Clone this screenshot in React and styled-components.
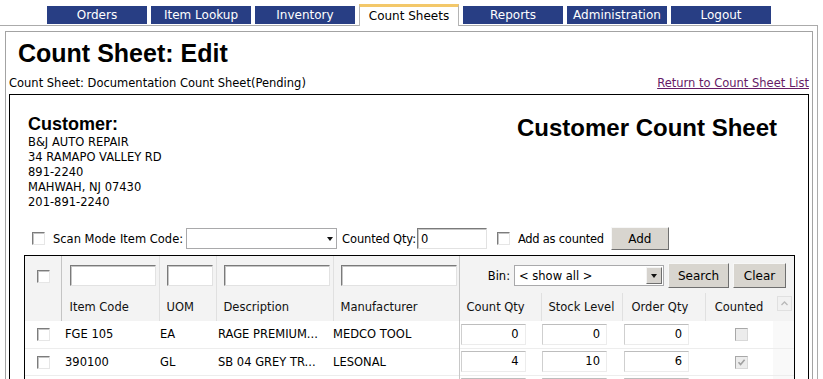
import styled, { createGlobalStyle } from 'styled-components'

const GlobalStyle = createGlobalStyle`
  body {
    margin: 0;
    background: #fff;
    font-family: "DejaVu Sans", Verdana, sans-serif;
    font-size: 11.5px;
    color: #000;
  }
`

const tabs = ['Orders', 'Item Lookup', 'Inventory', 'Count Sheets', 'Reports', 'Administration', 'Logout']

// the third row only shows the top of its qty boxes in the screenshot
const rows = [
  { id: 1, code: 'FGE 105', uom: 'EA', desc: 'RAGE PREMIUM...', mfr: 'MEDCO TOOL', count: 0, stock: 0, order: 0, counted: false },
  { id: 2, code: '390100', uom: 'GL', desc: 'SB 04 GREY TR...', mfr: 'LESONAL', count: 4, stock: 10, order: 6, counted: true },
  { id: 3, code: '', uom: '', desc: '', mfr: '', count: '', stock: '', order: '', counted: false, hidden: true },
]

const address = ['B&J AUTO REPAIR', '34 RAMAPO VALLEY RD', '891-2240', 'MAHWAH, NJ 07430', '201-891-2240']

const Page = styled.div`
  width: 823px;
  overflow: hidden;
`

const TabBar = styled.nav`
  position: relative;
  z-index: 1;
  height: 25px;
  display: flex;
  align-items: flex-end;
  gap: 4px;
  padding-left: 47px;
`

const Tab = styled.div`
  box-sizing: border-box;
  width: 100px;
  height: ${p => (p.$active ? '22px' : '18px')};
  margin-bottom: ${p => (p.$active ? '-1px' : '1px')};
  padding-bottom: ${p => (p.$active ? '1px' : '0')};
  display: flex;
  align-items: center;
  justify-content: center;
  background: ${p => (p.$active ? '#fff' : '#283e84')};
  color: ${p => (p.$active ? '#000' : '#fff')};
  border-top: ${p => (p.$active ? '3px solid #f3c86a' : 'none')};
  border-left: ${p => (p.$active ? '1px solid #b4b4b4' : 'none')};
  border-right: ${p => (p.$active ? '1px solid #b4b4b4' : 'none')};
  font-size: 12px;
`

const Frame = styled.div`
  width: 818px;
  box-sizing: border-box;
  border-top: 1px solid #ababab;
  border-right: 1px solid #ababab;
  padding: 5px 4px 0 5px;
`

const Panel = styled.div`
  border: 1px solid #a3a3a3;
  border-bottom: none;
  padding: 0 3px;
  min-height: 360px;
`

const Title = styled.h1`
  margin: 6px 0 0 9px;
  font-family: "Liberation Sans", Arial, sans-serif;
  font-size: 25px;
  line-height: 30px;
  font-weight: bold;
`

const SubRow = styled.div`
  margin-top: 8px;
  height: 14px;
  line-height: 14px;
  display: flex;
  justify-content: space-between;
`

const ReturnLink = styled.a`
  color: #661a66;
  text-decoration: underline;
`

const SheetBox = styled.div`
  margin-top: 4px;
  border: 1px solid #000;
  border-bottom: none;
  min-height: 300px;
`

const CustomerHeader = styled.div`
  display: flex;
  justify-content: space-between;
  align-items: flex-start;
  padding: 19px 31px 0 18px;
`

const CustomerLabel = styled.div`
  font-family: "Liberation Sans", Arial, sans-serif;
  font-weight: bold;
  font-size: 18px;
  line-height: 21px;
`

const AddressLine = styled.div`
  line-height: 15px;
`

const SheetTitle = styled.div`
  font-family: "Liberation Sans", Arial, sans-serif;
  font-weight: bold;
  font-size: 24px;
  line-height: 28px;
`

const ScanRow = styled.div`
  margin-top: 17px;
  height: 23px;
  display: flex;
  align-items: center;
  padding-left: 22px;
`

const Label = styled.span`
  margin-left: ${p => p.$ml || 0}px;
  white-space: nowrap;
  letter-spacing: ${p => p.$ls || 0}px;
`

const Box = styled.span`
  box-sizing: border-box;
  display: inline-flex;
  align-items: center;
  justify-content: center;
  flex: none;
  width: 13px;
  height: 13px;
  margin-left: ${p => p.$ml || 0}px;
  border: 1px solid;
  border-color: ${p => (p.$disabled ? '#a8a8a8 #d8d8d8 #d8d8d8 #a8a8a8' : '#7c7c7c #e6e6e6 #e6e6e6 #7c7c7c')};
  box-shadow: ${p => (p.$disabled ? 'none' : 'inset 1px 1px 0 #c4c4c4')};
  background: ${p => (p.$disabled ? '#ececec' : '#fff')};
  vertical-align: middle;
`

const Checkbox = ({ checked, disabled, ml }) => (
  <Box $disabled={disabled} $ml={ml}>
    {checked && (
      <svg width="9" height="9" viewBox="0 0 9 9">
        <path d="M1.5 4.2 L3.6 6.5 L7.6 1.8" stroke="#a0a0a0" strokeWidth="1.6" fill="none" />
      </svg>
    )}
  </Box>
)

const Combo = styled.div`
  box-sizing: border-box;
  width: ${p => p.$w}px;
  height: 21px;
  margin-left: ${p => p.$ml || 0}px;
  border: 1px solid #a9a9ab;
  background: #fff;
  display: flex;
  align-items: center;
  justify-content: space-between;
  padding: 0 ${p => p.$pr ?? 3}px 0 4px;
  text-align: left;
`

const Caret = styled.span`
  width: 0;
  height: 0;
  border-left: 3.5px solid transparent;
  border-right: 3.5px solid transparent;
  border-top: 4px solid #111;
`

const DropButton = styled.span`
  box-sizing: border-box;
  width: 16px;
  height: 17px;
  display: flex;
  align-items: center;
  justify-content: center;
  background: #d6d3ce;
  border: 1px solid;
  border-color: #f4f4f4 #6e6e6e #6e6e6e #f4f4f4;
`

const TextBox = styled.div`
  box-sizing: border-box;
  width: ${p => p.$w}px;
  height: ${p => p.$h || 21}px;
  margin-left: ${p => p.$ml || 0}px;
  border: 1px solid;
  border-color: #7a7a7a #e2e2e2 #e2e2e2 #7a7a7a;
  box-shadow: inset 1px 1px 0 #c6c6c6;
  background: #fff;
  padding: 0 3px;
  display: flex;
  align-items: center;
`

const Button = styled.button`
  box-sizing: border-box;
  width: ${p => p.$w}px;
  height: ${p => p.$h || 23}px;
  margin-left: ${p => p.$ml || 0}px;
  font-family: inherit;
  font-size: 12px;
  color: #000;
  background: #d8d5cf;
  border: 1px solid;
  border-color: #f7f7f7 #6f6f6f #6f6f6f #f7f7f7;
  padding: 0;
`

const TableWrap = styled.div`
  margin: 5px 0 0 14px;
  width: 771px;
  box-sizing: border-box;
  border: 1px solid #000;
  border-bottom: none;
`

const Grid = styled.table`
  width: 769px;
  table-layout: fixed;
  border-collapse: collapse;
  font-size: 11.5px;
`

const FilterCell = styled.td`
  height: 35px;
  padding: 2px 0 0 ${p => p.$pl ?? 8}px;
  background: #f3f3f3;
  border-left: 1px solid ${p => (p.$strong ? '#c4c4c4' : '#e0e0e0')};
  vertical-align: middle;
  &:first-child { border-left: none; }
`

const BinGroup = styled.div`
  display: flex;
  align-items: center;
  justify-content: flex-end;
  padding-right: 8px;
`

const HeadCell = styled.th`
  height: 28px;
  padding: 0 0 0 ${p => p.$pl ?? 8}px;
  background: #f3f3f3;
  border-left: 1px solid ${p => (p.$strong ? '#c4c4c4' : p.$none ? 'transparent' : '#e0e0e0')};
  font-weight: normal;
  text-align: ${p => p.$align || 'left'};
  vertical-align: ${p => p.$valign || 'middle'};
  color: #111;
  &:first-child { border-left: none; }
`

const ScrollUp = styled.div`
  box-sizing: border-box;
  width: 15px;
  height: 15px;
  margin: 3px 0 0 3px;
  background: #f1f1f1;
  border: 1px solid #e0e0e0;
  display: flex;
  align-items: center;
  justify-content: center;
`

const DataRow = styled.tr`
  height: 27px;
  border-bottom: 1px solid #ededed;
`

const Cell = styled.td`
  padding: 0 0 0 ${p => p.$pl ?? 3}px;
  vertical-align: middle;
  white-space: nowrap;
  overflow: hidden;
  border-left: ${p => (p.$divide ? '1px solid #c8c8c8' : 'none')};
  background: ${p => p.$bg || 'transparent'};
`

const QtyBox = styled.div`
  box-sizing: border-box;
  width: 65px;
  height: 21px;
  margin-left: ${p => p.$ml || 0}px;
  border: 1px solid;
  border-color: #bdbdbd #ececec #ececec #cfcfcf;
  text-align: right;
  padding-right: 6px;
  line-height: 19px;
`

const cols = [36, 98, 57, 117, 126, 82, 81, 83, 68, 21]

export default function App() {
  return (
    <Page>
      <GlobalStyle />
      <TabBar>
        {tabs.map(t => (
          <Tab key={t} $active={t === 'Count Sheets'}>{t}</Tab>
        ))}
      </TabBar>
      <Frame>
        <Panel>
          <Title>Count Sheet: Edit</Title>
          <SubRow>
            <span>Count Sheet: Documentation Count Sheet(Pending)</span>
            <ReturnLink href="#">Return to Count Sheet List</ReturnLink>
          </SubRow>
          <SheetBox>
            <CustomerHeader>
              <div>
                <CustomerLabel>Customer:</CustomerLabel>
                {address.map(line => (
                  <AddressLine key={line}>{line}</AddressLine>
                ))}
              </div>
              <SheetTitle>Customer Count Sheet</SheetTitle>
            </CustomerHeader>

            <ScanRow>
              <Checkbox />
              <Label $ml={8}>Scan Mode</Label>
              <Label $ml={4}>Item Code:</Label>
              <Combo $w={151} $ml={3}>
                <span />
                <Caret />
              </Combo>
              <Label $ml={5} $ls={-0.15}>Counted Qty:</Label>
              <TextBox $w={70} $h={21} $ml={1}>0</TextBox>
              <Checkbox ml={10} />
              <Label $ml={8} $ls={-0.25}>Add as counted</Label>
              <Button $w={58} $ml={7}>Add</Button>
            </ScanRow>

            <TableWrap>
              <Grid>
                <colgroup>
                  {cols.map((w, i) => (
                    <col key={i} style={{ width: w }} />
                  ))}
                </colgroup>
                <thead>
                  <tr>
                    <FilterCell $pl={12}><Checkbox /></FilterCell>
                    <FilterCell $strong $pl={8}><TextBox $w={86} /></FilterCell>
                    <FilterCell $pl={7}><TextBox $w={46} /></FilterCell>
                    <FilterCell $pl={7}><TextBox $w={106} /></FilterCell>
                    <FilterCell $pl={7}><TextBox $w={116} /></FilterCell>
                    <FilterCell colSpan={5} $strong $pl={0}>
                      <BinGroup>
                        <span>Bin:</span>
                        <Combo $w={150} $ml={4} $pr={1}>
                          <span>&lt; show all &gt;</span>
                          <DropButton><Caret /></DropButton>
                        </Combo>
                        <Button $w={61} $h={25} $ml={4}>Search</Button>
                        <Button $w={53} $h={25} $ml={4}>Clear</Button>
                      </BinGroup>
                    </FilterCell>
                  </tr>
                  <tr>
                    <HeadCell />
                    <HeadCell $strong $pl={8}>Item Code</HeadCell>
                    <HeadCell $pl={7}>UOM</HeadCell>
                    <HeadCell $pl={7}>Description</HeadCell>
                    <HeadCell $pl={7}>Manufacturer</HeadCell>
                    <HeadCell $strong $pl={7}>Count Qty</HeadCell>
                    <HeadCell $pl={7}>Stock Level</HeadCell>
                    <HeadCell $pl={9}>Order Qty</HeadCell>
                    <HeadCell $pl={0} $align="center">Counted</HeadCell>
                    <HeadCell $pl={0} $none $valign="top">
                      <ScrollUp>
                        <svg width="7" height="5" viewBox="0 0 7 5">
                          <path d="M0.5 4 L3.5 1 L6.5 4" stroke="#b8b8b8" strokeWidth="1.3" fill="none" />
                        </svg>
                      </ScrollUp>
                    </HeadCell>
                  </tr>
                </thead>
                <tbody>
                  {rows.map(r => (
                    <DataRow key={r.id}>
                      <Cell $pl={12}>{!r.hidden && <Checkbox />}</Cell>
                      <Cell $pl={4}>{r.code}</Cell>
                      <Cell $pl={1}>{r.uom}</Cell>
                      <Cell $pl={2}>{r.desc}</Cell>
                      <Cell $pl={0}>{r.mfr}</Cell>
                      <Cell $pl={1} $divide><QtyBox>{r.count}</QtyBox></Cell>
                      <Cell $pl={1}><QtyBox>{r.stock}</QtyBox></Cell>
                      <Cell $pl={2}><QtyBox>{r.order}</QtyBox></Cell>
                      <Cell $pl={30}>{!r.hidden && <Checkbox disabled checked={r.counted} />}</Cell>
                      <Cell $bg="#f9f9f9" />
                    </DataRow>
                  ))}
                </tbody>
              </Grid>
            </TableWrap>
          </SheetBox>
        </Panel>
      </Frame>
    </Page>
  )
}
